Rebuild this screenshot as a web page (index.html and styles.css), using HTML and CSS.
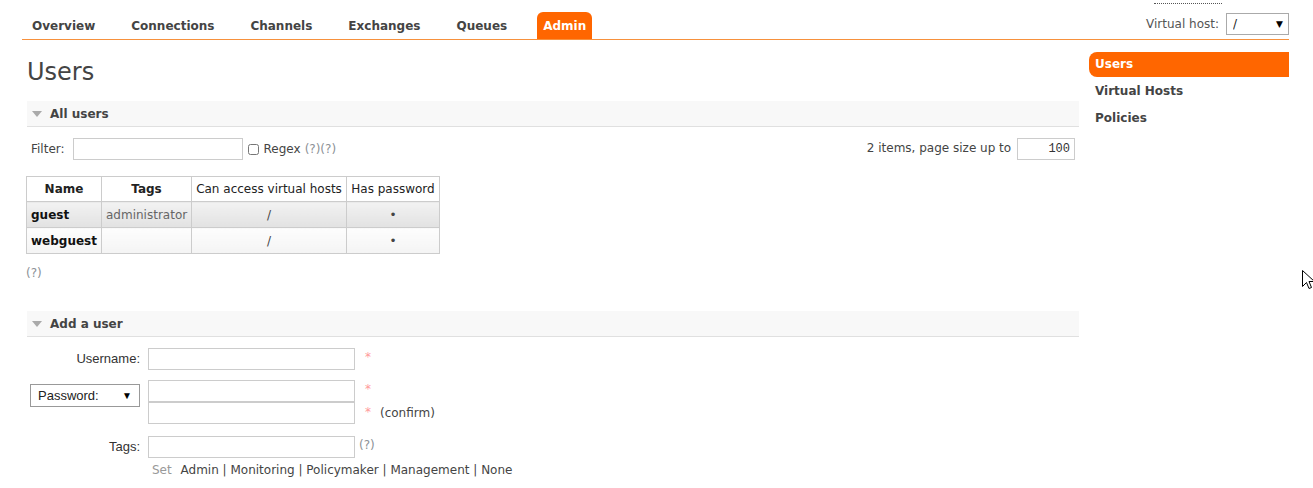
FILE: index.html
```html
<!DOCTYPE html>
<html lang="en">
<head>
  <meta charset="UTF-8">
  <title>RabbitMQ Management - Users</title>
  <link rel="stylesheet" href="styles.css">
</head>
<body>
<div class="page">
  <!-- top menu -->
  <div class="top">
    <ul class="tabs">
      <li><a href="#">Overview</a></li>
      <li><a href="#">Connections</a></li>
      <li><a href="#">Channels</a></li>
      <li><a href="#">Exchanges</a></li>
      <li><a href="#">Queues</a></li>
      <li class="selected"><a href="#">Admin</a></li>
    </ul>
    <div class="vhost">
      <div class="login"></div>
      <label>Virtual host:</label>
      <span class="sel sel-vhost"><select><option>/</option></select></span>
    </div>
  </div>

  <div class="layout">
    <div class="main">
      <h1>Users</h1>

      <div class="section">
        <h2><span class="arrow"></span>All users</h2>
        <div class="filter-row">
          <div class="filter">
            <label>Filter:</label>
            <input type="text" class="filter-input">
            <input type="checkbox" class="regex-box">
            <span>Regex</span>
            <span class="help">(?)(?)</span>
          </div>
          <div class="paging">
            <span>2 items, page size up to</span>
            <input type="text" class="page-size" value="100">
          </div>
        </div>

        <table class="list">
          <colgroup>
            <col class="c-name"><col class="c-tags"><col class="c-vhosts"><col class="c-pass">
          </colgroup>
          <thead>
            <tr>
              <th class="b">Name</th>
              <th class="b">Tags</th>
              <th>Can access virtual hosts</th>
              <th>Has password</th>
            </tr>
          </thead>
          <tbody>
            <tr class="alt1">
              <td class="name">guest</td>
              <td class="tags">administrator</td>
              <td>/</td>
              <td>&bull;</td>
            </tr>
            <tr class="alt2">
              <td class="name">webguest</td>
              <td class="tags"></td>
              <td>/</td>
              <td>&bull;</td>
            </tr>
          </tbody>
        </table>
        <p class="help under-table">(?)</p>
      </div>

      <div class="section">
        <h2><span class="arrow"></span>Add a user</h2>
        <div class="form">
          <div class="row">
            <label class="lbl">Username:</label>
            <input type="text" class="field">
            <span class="mand">*</span>
          </div>
          <div class="row pass-row">
            <span class="lbl"><span class="sel sel-pass"><select><option>Password:</option></select></span></span>
            <div class="pass-fields">
              <div class="pf"><input type="password" class="field"><span class="mand">*</span></div>
              <div class="pf"><input type="password" class="field"><span class="mand">*</span><span class="confirm">(confirm)</span></div>
            </div>
          </div>
          <div class="row">
            <label class="lbl">Tags:</label>
            <input type="text" class="field">
            <span class="help tag-help">(?)</span>
          </div>
          <div class="set-tags">
            <span class="set">Set</span>
            <a href="#">Admin</a> | <a href="#">Monitoring</a> | <a href="#">Policymaker</a> | <a href="#">Management</a> | <a href="#">None</a>
          </div>
        </div>
      </div>
    </div>

    <ul class="side">
      <li class="selected"><a href="#">Users</a></li>
      <li><a href="#">Virtual Hosts</a></li>
      <li><a href="#">Policies</a></li>
    </ul>
  </div>
</div>

<!-- mouse pointer caught in the screenshot -->
<svg class="cursor" width="13" height="20" viewBox="0 0 13 20">
  <path d="M0.5 0.5 L0.5 16.5 L4.5 12.5 L7 18.5 L9.5 17.5 L7 11.5 L12.5 11.5 Z" fill="#fff" stroke="#000" stroke-width="1"/>
</svg>
</body>
</html>
```

FILE: styles.css
```css
body {
  margin: 0;
  font-family: "DejaVu Sans", Verdana, sans-serif;
  font-size: 12px;
  color: #444;
  background: #fff;
}
a {
  color: #444;
  text-decoration: none;
}
.page {
  width: 1267px;
  margin-left: 22px;
}
/* top menu */
.top {
  display: flex;
  justify-content: space-between;
  align-items: flex-end;
  height: 39px;
  border-bottom: 1px solid #f7913d;
}
.tabs {
  display: flex;
  list-style: none;
  margin: 0;
  padding: 0 0 0 4px;
}
.tabs li {
  margin-right: 24px;
}
.tabs a {
  display: block;
  height: 27px;
  line-height: 29px;
  padding: 0 6px;
  font-weight: bold;
  font-size: 12px;
  color: #444;
  border-radius: 6px 6px 0 0;
}
.tabs .selected a {
  background: #f60;
  color: #fff;
}
.vhost {
  position: relative;
  display: flex;
  align-items: center;
  margin-bottom: 4px;
  color: #555;
}
.vhost label {
  margin-right: 7px;
}
.login {
  position: absolute;
  right: 67px;
  top: -12px;
  width: 68px;
  height: 2px;
  border-bottom: 1px dotted #555;
}
.sel {
  position: relative;
  display: inline-block;
}
.sel select {
  -webkit-appearance: none;
  appearance: none;
  background: #fff;
  border: 1px solid #aaa;
  border-radius: 0;
  color: #222;
  margin: 0;
}
.sel::after {
  content: "\25BC";
  position: absolute;
  right: 6px;
  top: 50%;
  transform: translateY(-50%);
  font-size: 9px;
  color: #000;
  pointer-events: none;
}
.sel-vhost select {
  width: 63px;
  height: 22px;
  padding: 0 0 0 6px;
  font-family: "DejaVu Sans", Verdana, sans-serif;
  font-size: 12px;
}
/* layout */
.layout {
  display: flex;
  align-items: flex-start;
}
.main {
  width: 1052px;
  padding-left: 5px;
}
.side {
  list-style: none;
  margin: 12px 0 0 10px;
  padding: 0;
  width: 200px;
}
.side a {
  display: block;
  height: 27px;
  line-height: 25px;
  padding-left: 6px;
  font-weight: bold;
  color: #444;
  border-radius: 8px 0 0 8px;
}
.side .selected a {
  background: #f60;
  color: #fff;
  height: 25px;
  margin-bottom: 2px;
}
h1 {
  font-size: 24px;
  font-weight: normal;
  margin: 18px 0 0 0;
  line-height: 28px;
  color: #444;
}
/* collapsible sections */
.section h2 {
  display: flex;
  align-items: center;
  height: 25px;
  margin: 0;
  background: #f8f8f8;
  border-bottom: 1px solid #e0e0e0;
  font-size: 12px;
  font-weight: bold;
  color: #444;
}
.section:first-of-type h2 {
  margin-top: 15px;
}
.arrow {
  width: 0;
  height: 0;
  margin: 0 8px 0 5px;
  border-left: 5px solid transparent;
  border-right: 5px solid transparent;
  border-top: 6px solid #aaa;
}
.filter-row {
  display: flex;
  justify-content: space-between;
  align-items: center;
  margin: 11px 4px 16px 4px;
}
.filter {
  display: flex;
  align-items: center;
}
.filter label {
  margin-right: 8px;
}
input[type="text"], input[type="password"] {
  box-sizing: border-box;
  border: 1px solid #ccc;
  height: 22px;
  margin: 0;
  padding: 0 4px;
}
.filter-input {
  width: 170px;
}
.regex-box {
  width: 11px;
  height: 11px;
  margin: 0 5px 0 5px;
}
.help {
  color: #8c9196;
  margin-left: 4px;
}
.paging input.page-size {
  width: 58px;
  margin-left: 2px;
  text-align: right;
  font-family: "Liberation Mono", monospace;
  font-size: 12px;
  color: #333;
}
/* users table */
table.list {
  border-collapse: collapse;
  table-layout: fixed;
  width: 414px;
  margin-left: -1px;
}
.c-name { width: 75px; }
.c-tags { width: 90px; }
.c-vhosts { width: 155px; }
.c-pass { width: 93px; }
table.list th, table.list td {
  border: 1px solid #ccc;
  height: 25px;
  padding: 0 4px;
  text-align: center;
  white-space: nowrap;
}
table.list th {
  height: 24px;
  font-weight: normal;
  color: #222;
  background: #fff;
}
table.list th.b {
  font-weight: bold;
}
table.list td.name {
  text-align: left;
  font-weight: bold;
  color: #111;
}
table.list td.tags {
  color: #666;
}
tr.alt1 td {
  background: linear-gradient(#f2f2f2, #e2e2e2);
}
tr.alt2 td {
  background: linear-gradient(#fdfdfd, #f4f4f4);
}
.under-table {
  margin: 12px 0 31px -1px;
}
/* add user form */
.form {
  padding-top: 11px;
}
.row {
  display: flex;
  align-items: flex-start;
  margin-bottom: 10px;
}
.lbl {
  width: 113px;
  text-align: right;
  margin-right: 8px;
  font-family: "Liberation Sans", Arial, sans-serif;
  font-size: 13px;
  line-height: 22px;
  color: #333;
}
.field {
  width: 207px;
}
.mand {
  color: #f99;
  margin-left: 10px;
  line-height: 18px;
}
.pass-row {
  margin-bottom: 12px;
}
.pass-row .lbl {
  display: flex;
  justify-content: flex-start;
  padding-top: 4px;
}
.sel-pass {
  margin-left: 3px;
}
.sel-pass select {
  width: 110px;
  height: 23px;
  padding: 0 0 0 7px;
  font-family: "Liberation Sans", Arial, sans-serif;
  font-size: 13px;
  border-color: #999;
}
.sel-pass::after {
  right: 8px;
  font-size: 10px;
}
.pf {
  display: flex;
  align-items: flex-start;
}
.confirm {
  margin-left: 9px;
  line-height: 22px;
}
.pf:last-child .mand {
  line-height: 20px;
}
.tag-help {
  line-height: 18px;
}
.set-tags {
  margin: -5px 0 0 125px;
  color: #444;
}
.set {
  color: #999;
  margin-right: 5px;
}
.cursor {
  position: absolute;
  left: 1302px;
  top: 270px;
}
```
